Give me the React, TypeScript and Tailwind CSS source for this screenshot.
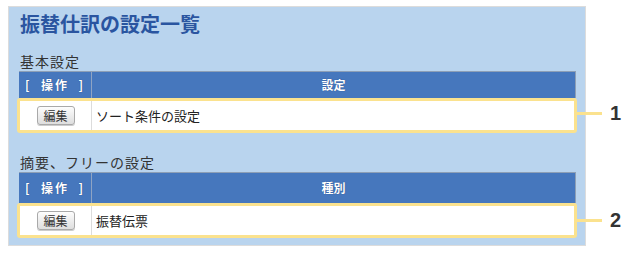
import React from "react";

const font = { fontFamily: '"Noto Sans CJK JP", "Liberation Sans", sans-serif' };

function EditButton() {
  return (
    <button className="w-[38px] h-[19px] rounded-[3px] border border-[#a9a9a9] bg-gradient-to-b from-[#fdfdfd] to-[#dedede] text-[12px] leading-[17px] text-[#333] shadow-[0_1px_0_#ccc]">
      編集
    </button>
  );
}

function Section({ label, col, value, headH, gap, callout }: { label: string; col: string; value: string; headH: string; gap: string; callout: string }) {
  const tall = headH !== "h-[27px]";
  return (
    <div className={gap}>
      <div className="text-[14px] leading-[18px] tracking-[1px] text-[#333] pl-[3px]">{label}</div>
      <div className="relative mt-[1px]">
        <div className={`ml-[2px] mr-[1px] flex bg-[#4677bd] border-t border-r border-[#8d9fb6] text-white font-bold text-[12px] ${headH}`}>
          <div className="w-[73px] flex items-center justify-center border-r border-[#8fa4c4] tracking-[2px] [text-shadow:0_0_1px_#1d3f7a]">
            [&nbsp;&nbsp;操作&nbsp;&nbsp;]
          </div>
          <div className="flex-1 flex items-center justify-center [text-shadow:0_0_1px_#1d3f7a]">{col}</div>
        </div>
        <div className="h-[35px] border-[3px] border-[#fbe28e] rounded-[3px] bg-white flex">
          <div className="w-[72px] flex items-center justify-center border-r border-[#dcdcdc]">
            <EditButton />
          </div>
          <div className="flex-1 flex items-center pl-[4px] text-[13px] text-[#222]">{value}</div>
        </div>
        <div className="absolute right-[-25px] h-[3px] w-[25px] bg-[#fbe28e]" style={{ top: tall ? 47 : 41 }} />
        <div className="absolute right-[-47px] w-[14px] text-[20px] font-bold text-[#333] leading-[20px]" style={{ top: tall ? 38 : 32, fontFamily: '"Liberation Sans", sans-serif' }}>
          {callout}
        </div>
      </div>
    </div>
  );
}

export default function App() {
  return (
    <div className="w-[628px] h-[254px] bg-white pt-[6px] pl-[8px]" style={font}>
      <div className="w-[578px] h-[240px] border border-[#dcdcdc] bg-[#b9d4ee] pl-[8px] pr-[8px]">
        <div className="pt-[4px] pl-[3px] text-[20px] leading-[26px] font-bold text-[#2a55a0]">振替仕訳の設定一覧</div>
        <Section label="基本設定" col="設定" value="ソート条件の設定" headH="h-[27px]" gap="mt-[15px]" callout="1" />
        <Section label="摘要、フリーの設定" col="種別" value="振替伝票" headH="h-[31px]" gap="mt-[20px]" callout="2" />
      </div>
    </div>
  );
}
